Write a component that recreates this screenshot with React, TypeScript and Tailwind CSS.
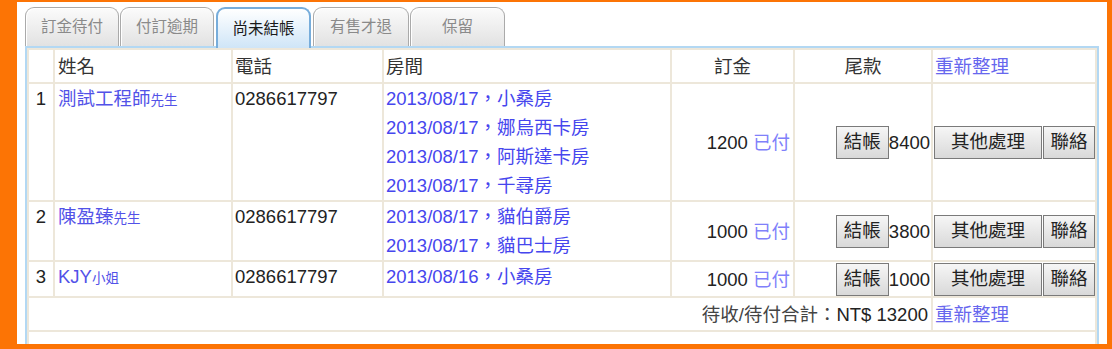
import React from "react";

const FONT = "font-['Liberation_Sans','Noto_Sans_CJK_TC',sans-serif]";

type Row = {
  n: number;
  name: string;
  title: string;
  phone: string;
  rooms: [string, string][];
  deposit: number;
  balance: number;
};

const rows: Row[] = [
  {
    n: 1,
    name: "測試工程師",
    title: "先生",
    phone: "0286617797",
    rooms: [
      ["2013/08/17", "小桑房"],
      ["2013/08/17", "娜烏西卡房"],
      ["2013/08/17", "阿斯達卡房"],
      ["2013/08/17", "千尋房"],
    ],
    deposit: 1200,
    balance: 8400,
  },
  {
    n: 2,
    name: "陳盈臻",
    title: "先生",
    phone: "0286617797",
    rooms: [
      ["2013/08/17", "貓伯爵房"],
      ["2013/08/17", "貓巴士房"],
    ],
    deposit: 1000,
    balance: 3800,
  },
  {
    n: 3,
    name: "KJY",
    title: "小姐",
    phone: "0286617797",
    rooms: [["2013/08/16", "小桑房"]],
    deposit: 1000,
    balance: 1000,
  },
];

const tabs = ["訂金待付", "付訂逾期", "尚未結帳", "有售才退", "保留"];

const td = "border-2 border-[#ede7da] px-[2px] py-0";
const btn =
  "inline-flex items-center justify-center h-[33px] border border-[#7a7a7a] bg-gradient-to-b from-[#f6f6f6] to-[#d9d9d9] text-[#222] text-[18.5px] leading-none align-middle";

export default function App() {
  return (
    <div className={`${FONT} w-[1112px] h-[349px] bg-[#fc7405] pl-[17px] pt-[2px] pr-[5px] pb-[5px] overflow-hidden`}>
      <div className="bg-white w-full h-full overflow-hidden pl-[8px] pr-[8px] pt-[5px]">
        {/* Tabs */}
        <div className="flex items-end h-[39px] gap-[1px]">
          {tabs.map((t, i) => {
            const active = i === 2;
            const widths = ["w-[94px]", "w-[94px]", "w-[95px]", "w-[96px]", "w-[95px]"];
            return (
              <div
                key={t}
                className={`${widths[i]} h-[39px] rounded-t-[9px] flex items-center justify-center text-[15.5px] ${
                  active
                    ? "border-2 border-b-0 border-[#77addb] bg-gradient-to-b from-white to-[#cfe5f7] text-[#1a1a1a] mx-[1px] h-[41px] -mb-[2px] relative z-10"
                    : "border border-b-0 border-[#aaaaaa] bg-gradient-to-b from-[#fbfbfb] to-[#e2e2e2] text-[#8a8a8a] shadow-[inset_1px_1px_0_#fff]"
                }`}
              >
                {t}
              </div>
            );
          })}
        </div>

        {/* Table container */}
        <div className="border-2 border-b-0 border-[#b3d8f3] h-[400px]">
          <table className="w-full table-fixed border-collapse text-[18.5px] leading-[29px] text-[#222]">
            <colgroup>
              <col className="w-[26px]" />
              <col className="w-[178px]" />
              <col className="w-[151px]" />
              <col className="w-[288px]" />
              <col className="w-[123px]" />
              <col className="w-[138px]" />
              <col />
            </colgroup>
            <thead>
              <tr className="h-[34px]">
                <th className={`${td} font-normal`}></th>
                <th className={`${td} font-normal text-left text-[#333] pl-[3px]`}>姓名</th>
                <th className={`${td} font-normal text-left text-[#333]`}>電話</th>
                <th className={`${td} font-normal text-left text-[#333]`}>房間</th>
                <th className={`${td} font-normal text-center text-[#333]`}>訂金</th>
                <th className={`${td} font-normal text-center text-[#333]`}>尾款</th>
                <th className={`${td} font-normal text-left`}>
                  <span className="text-[#6767ee]">重新整理</span>
                </th>
              </tr>
            </thead>
            <tbody>
              {rows.map((r) => (
                <tr key={r.n} className={r.rooms.length === 1 ? "h-[36px]" : ""}>
                  <td className={`${td} align-top text-center`}>{r.n}</td>
                  <td className={`${td} align-top pl-[3px]`}>
                    <span className="text-[#5252e8]">{r.name}</span>
                    <span className="text-[#5252e8] text-[13.5px]">{r.title}</span>
                  </td>
                  <td className={`${td} align-top`}>{r.phone}</td>
                  <td className={`${td} align-top`}>
                    {r.rooms.map(([d, room], k) => (
                      <div key={k} className="text-[#4646ee] whitespace-nowrap">
                        {d}，{room}
                      </div>
                    ))}
                  </td>
                  <td className={`${td} align-middle text-right pr-[3px] whitespace-nowrap`}>
                    {r.deposit} <span className="text-[#8080fa]">已付</span>
                  </td>
                  <td className={`${td} align-middle text-right pr-[1px] whitespace-nowrap`}>
                    <span className={`${btn} w-[53px]`}>結帳</span>
                    <span className="align-middle">{r.balance}</span>
                  </td>
                  <td className={`${td} align-middle pl-[1px] whitespace-nowrap`}>
                    <span className="inline-flex items-center align-middle">
                      <span className={`${btn} w-[108px]`}>其他處理</span>
                      <span className={`${btn} w-[52px] ml-[1px]`}>聯絡</span>
                    </span>
                  </td>
                </tr>
              ))}
              <tr className="h-[34px]">
                <td colSpan={6} className={`${td} align-middle text-right pr-[3px] whitespace-nowrap`}>
                  <span className="text-[#444]">待收/待付合計：</span>
                  <span className="text-[#222]">NT$ 13200</span>
                </td>
                <td className={`${td} align-middle`}>
                  <span className="text-[#6767ee]">重新整理</span>
                </td>
              </tr>
              <tr className="h-[40px]">
                <td colSpan={7} className={td}></td>
              </tr>
            </tbody>
          </table>
        </div>
      </div>
    </div>
  );
}
